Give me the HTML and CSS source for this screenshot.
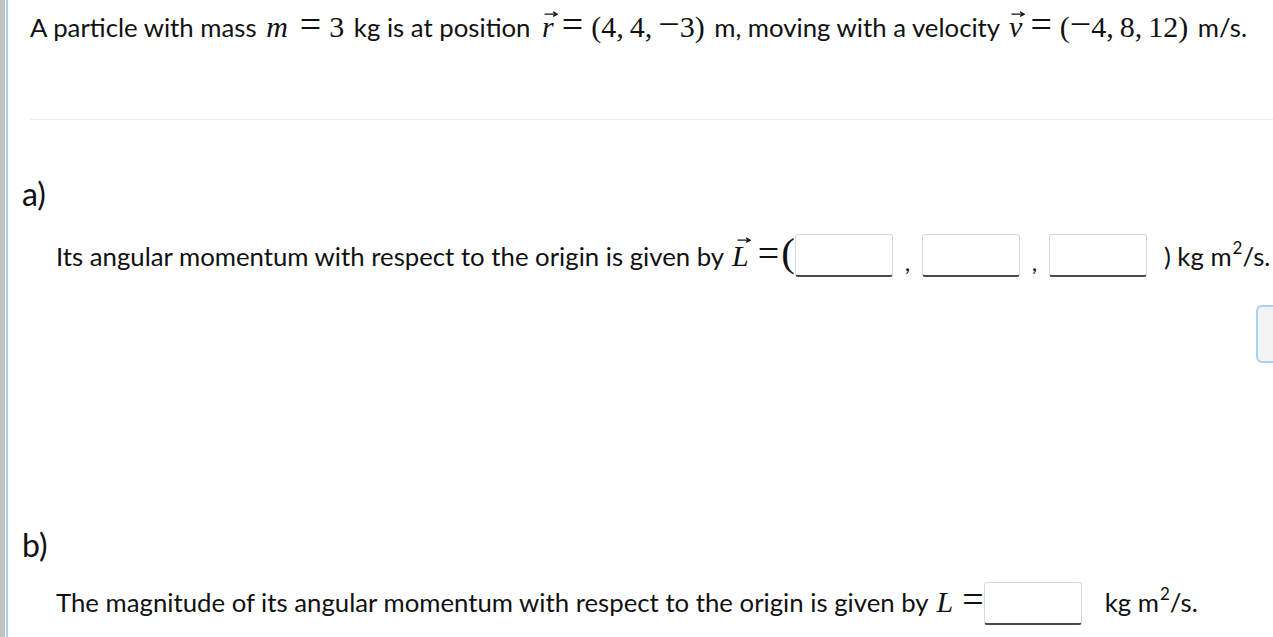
FILE: index.html
```html
<!DOCTYPE html>
<html lang="en">
<head>
<meta charset="utf-8">
<title>Angular momentum</title>
<link rel="stylesheet" href="styles.css">
</head>
<body>
<div class="page">
  <div class="frame">
    <p class="stem">A particle with mass <span class="math"><span class="mi">m</span><span class="mo mo-m">=</span><span class="mn">3</span></span> kg is at position <span class="math"><span class="vec vec-r"><span class="mi">r</span><svg class="arrow" viewBox="0 0 14 6"><path d="M0.5 3.2H12.5M9 0.8L13 3.2L9 5.4" /></svg></span><span class="mo">=</span><span class="mn">(4<span class="p">,</span>4<span class="p">,</span><span class="minus">&minus;</span>3)</span></span> m, moving with a velocity <span class="math"><span class="vec"><span class="mi">v</span><svg class="arrow" viewBox="0 0 14 6"><path d="M0.5 3.2H12.5M9 0.8L13 3.2L9 5.4" /></svg></span><span class="mo">=</span><span class="mn">(<span class="minus">&minus;</span>4<span class="p">,</span>8<span class="p">,</span>12)</span></span> m/s.</p>
    <hr class="sep">
    <section class="part part-a">
      <div class="label">a)</div>
      <div class="body">
        <p class="q">Its angular momentum with respect to the origin is given by <span class="math"><span class="vec vec-l"><span class="mi">L</span><svg class="arrow" viewBox="0 0 14 6"><path d="M0.5 3.2H12.5M9 0.8L13 3.2L9 5.4" /></svg></span><span class="mo mo-tight">=</span><span class="paren">(</span></span><input class="ans" type="text"><span class="comma">,</span><input class="ans" type="text"><span class="comma">,</span><input class="ans" type="text"><span class="unit">) kg m<sup>2</sup>/s.</span></p>
        <div class="actions"><button class="check" type="button"></button></div>
      </div>
    </section>
    <section class="part part-b">
      <div class="label">b)</div>
      <div class="body">
        <p class="q">The magnitude of its angular momentum with respect to the origin is given by <span class="math"><span class="mi">L</span><span class="mo mo-tight">=</span></span><input class="ans" type="text"><span class="unit unit-b">kg m<sup>2</sup>/s.</span></p>
      </div>
    </section>
  </div>
</div>
</body>
</html>
```
FILE: styles.css
```css
html, body {
  margin: 0;
  padding: 0;
  background: #ffffff;
  overflow: hidden;
}
.page {
  width: 1400px;
  height: 637px;
  border-left: 5px solid #c2c2c2;
  box-sizing: border-box;
  font-family: "Lato", "Liberation Sans", sans-serif;
  font-size: 25.75px;
  color: #111111;
}
.frame {
  border-left: 2px solid #a9d2f0;
  margin-left: 1px;
  height: 100%;
  padding-left: 22px;
}
.stem {
  margin: 0;
  padding-top: 9px;
  line-height: 36px;
  white-space: nowrap;
}
.sep {
  margin: 74px 0 0 0;
  border: 0;
  border-top: 1px solid #ececec;
  height: 0;
}
.part {
  display: flex;
  flex-direction: column;
}
.label {
  font-size: 32px;
  line-height: 40px;
  margin-left: -8px;
}
.part-a .label {
  margin-top: 54px;
}
.part-b .label {
  margin-top: 162px;
}
.body {
  padding-left: 26px;
}
.q {
  margin: 0;
  white-space: nowrap;
  display: flex;
  align-items: center;
  line-height: 30px;
}
.part-a .q {
  margin-top: 20px;
}
.part-b .q {
  margin-top: 14px;
}
.math {
  font-family: "Liberation Serif", "DejaVu Serif", serif;
  font-size: 30px;
  line-height: 30px;
  white-space: nowrap;
  margin: 0 3px 0 3px;
}
.mi {
  font-style: italic;
}
.mo {
  font-size: 38px;
  line-height: 0;
  margin: 0 8px 0 8px;
}
.mo-m {
  margin-left: 12px;
}
.mo-tight {
  margin: 0 0 0 9px;
}
.minus {
  font-size: 38px;
  line-height: 0;
}
.p {
  margin-right: 6px;
}
.paren {
  font-size: 41px;
  line-height: 0;
  margin-left: 2px;
}
.vec {
  position: relative;
  display: inline-block;
}
.vec-r {
  margin-left: 2px;
}
.arrow {
  position: absolute;
  left: 2px;
  top: -1px;
  width: 14px;
  height: 6px;
  fill: none;
  stroke: #111;
  stroke-width: 1.3;
}
.vec-l .arrow {
  left: 5px;
  top: -4px;
}
.q > .math {
  margin-left: 8px;
  margin-right: 0;
}
.ans {
  width: 98px;
  height: 43px;
  box-sizing: border-box;
  border: 1px solid #d9d9d9;
  border-bottom: 2px solid #4a4a4a;
  border-radius: 3px;
  background: #fff;
  margin: 0;
  padding: 0;
}
.part-a .ans {
  margin-bottom: 1px;
}
.part-b .ans {
  margin-top: 3px;
}
.comma {
  display: inline-block;
  width: 29px;
  text-align: center;
  position: relative;
  top: 6px;
  font-size: 24px;
}
.unit {
  margin-left: 17px;
}
.unit-b {
  margin-left: 23px;
}
sup {
  font-size: 17px;
  line-height: 0;
  vertical-align: 12px;
  margin-left: 1px;
}
.actions {
  display: flex;
  padding-left: 1200px;
  margin-top: 27px;
}
.check {
  width: 120px;
  height: 58px;
  border: 2px solid #a9d2f0;
  border-radius: 6px;
  background: #f3f3f3;
  padding: 0;
}
```
